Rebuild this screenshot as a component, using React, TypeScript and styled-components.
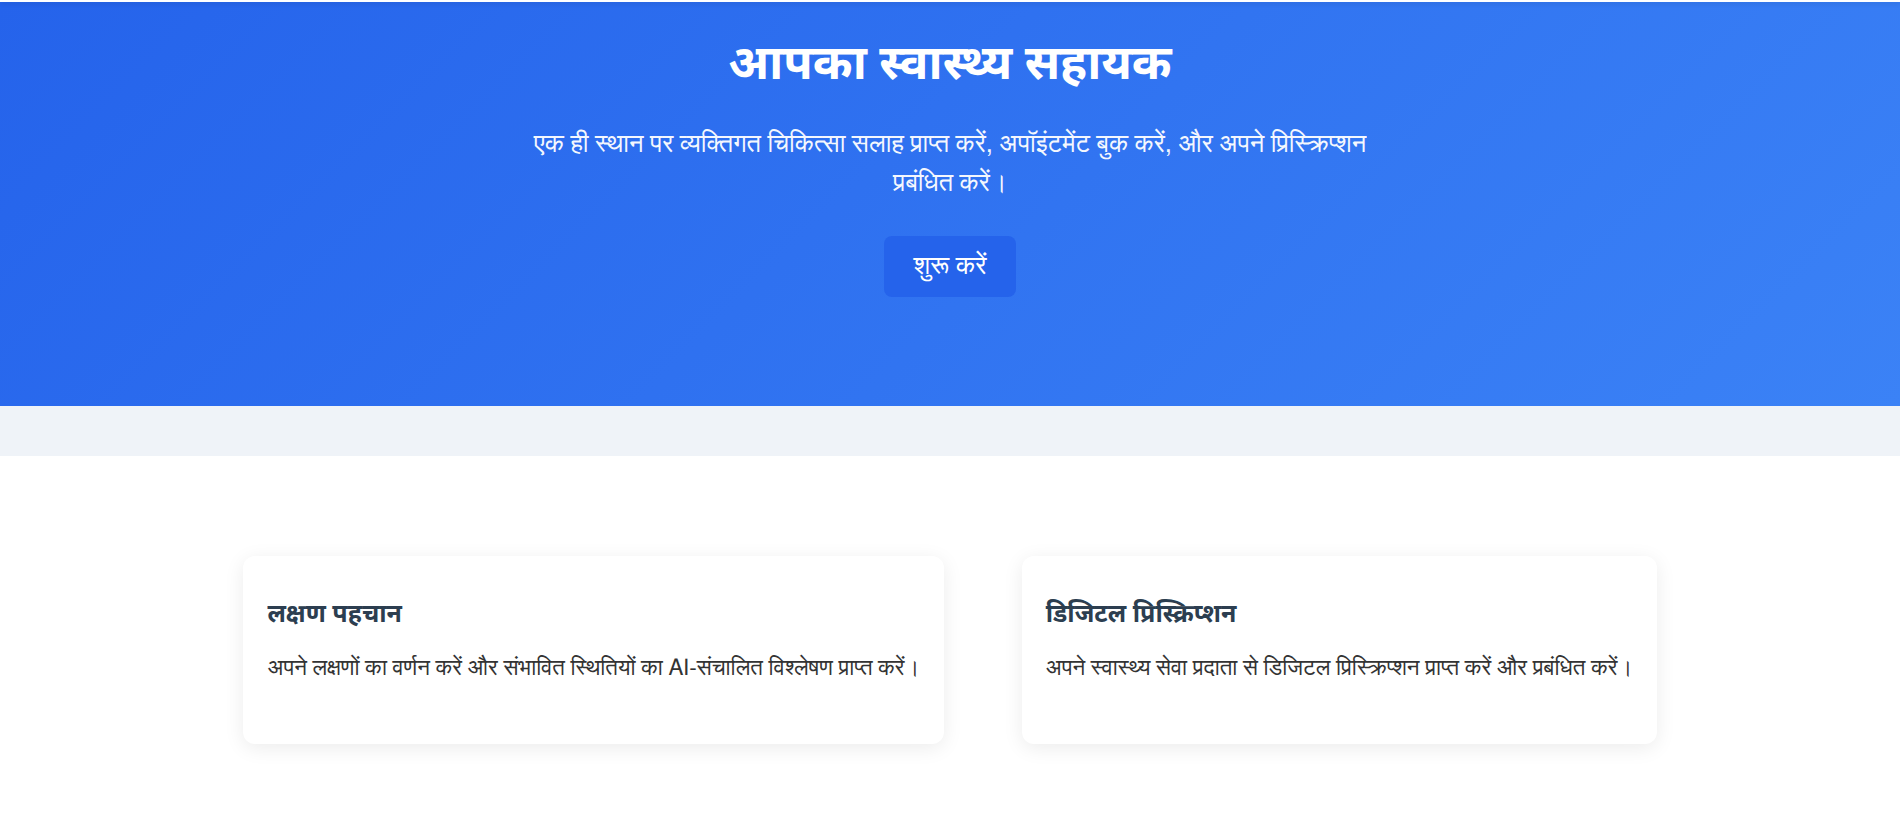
import React from "react";
import styled, { createGlobalStyle } from "styled-components";

const GlobalStyle = createGlobalStyle`
  * {
    box-sizing: border-box;
  }
  body {
    margin: 0;
    font-family: FreeSans, Helvetica, "Liberation Sans", sans-serif;
    background: #ffffff;
    color: #333333;
  }
`;

const TopBar = styled.header`
  height: 2px;
  background: #ffffff;
  box-shadow: 0 2px 4px rgba(0, 0, 0, 0.12);
  position: relative;
  z-index: 1;
`;

const Hero = styled.section`
  height: 404px;
  padding: 28px 20px 0;
  background: linear-gradient(135deg, #2563eb 0%, #3b82f6 100%);
  color: #ffffff;
  text-align: center;
  display: flex;
  flex-direction: column;
  align-items: center;
`;

const Title = styled.h1`
  margin: 0 0 34px;
  font-family: "Noto Sans", sans-serif;
  font-size: 48px;
  font-weight: 700;
  line-height: 1.3;
`;

const Subtitle = styled.p`
  margin: 0 0 32px;
  max-width: 860px;
  font-size: 25.6px;
  line-height: 1.52;
  opacity: 0.95;
`;

const StartButton = styled.button`
  padding: 15px 29px;
  border: none;
  border-radius: 8px;
  background: #2563eb;
  color: #ffffff;
  font-family: inherit;
  font-size: 26px;
  line-height: 1.2;
  cursor: pointer;

  &:hover {
    background: #1d4ed8;
  }
`;

const Band = styled.div`
  height: 50px;
  background: #eff3f8;
`;

const Features = styled.section`
  padding: 100px 20px 60px;
  display: flex;
  justify-content: center;
  gap: 78px;
`;

const Card = styled.article`
  padding: 40px 24px 0;
  height: 188px;
  background: #ffffff;
  border-radius: 12px;
  box-shadow: 0 4px 20px rgba(0, 0, 0, 0.08);
`;

const CardTitle = styled.h3`
  margin: 0 0 22px;
  font-family: "Noto Sans", sans-serif;
  font-size: 25px;
  font-weight: 700;
  line-height: 1.3;
  color: #2c3e50;
`;

const CardText = styled.p`
  margin: 0;
  font-size: 22.4px;
  line-height: 1.6;
  color: #333333;
`;

const features = [
  {
    title: "लक्षण पहचान",
    text: "अपने लक्षणों का वर्णन करें और संभावित स्थितियों का AI-संचालित विश्लेषण प्राप्त करें।",
  },
  {
    title: "डिजिटल प्रिस्क्रिप्शन",
    text: "अपने स्वास्थ्य सेवा प्रदाता से डिजिटल प्रिस्क्रिप्शन प्राप्त करें और प्रबंधित करें।",
  },
];

export default function App() {
  return (
    <>
      <GlobalStyle />
      <TopBar />
      <Hero>
        <Title>आपका स्वास्थ्य सहायक</Title>
        <Subtitle>
          एक ही स्थान पर व्यक्तिगत चिकित्सा सलाह प्राप्त करें, अपॉइंटमेंट बुक करें, और अपने प्रिस्क्रिप्शन प्रबंधित करें।
        </Subtitle>
        <StartButton>शुरू करें</StartButton>
      </Hero>
      <Band />
      <Features>
        {features.map((f) => (
          <Card key={f.title}>
            <CardTitle>{f.title}</CardTitle>
            <CardText>{f.text}</CardText>
          </Card>
        ))}
      </Features>
    </>
  );
}
